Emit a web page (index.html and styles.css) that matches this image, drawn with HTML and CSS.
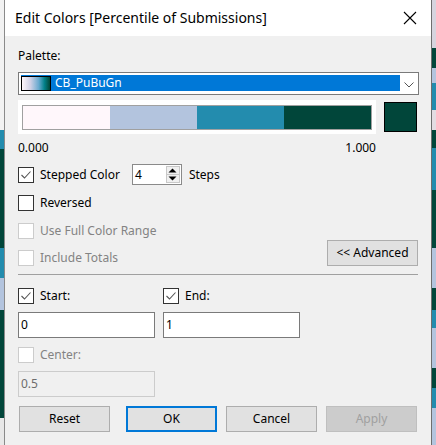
FILE: index.html
```html
<!DOCTYPE html>
<html>
<head>
<meta charset="utf-8">
<link rel="stylesheet" href="styles.css">
</head>
<body>
<div class="screen">
  <div class="strip strip-left"></div>
  <div class="dialog">
    <div class="titlebar">
      <span class="title">Edit Colors [Percentile of Submissions]</span>
      <svg class="close" width="14" height="14" viewBox="0 0 14 14"><path d="M1 1 L13 13 M13 1 L1 13" stroke="#000" stroke-width="1.1" fill="none"/></svg>
    </div>
    <div class="body">
      <div class="label palette-label">Palette:</div>
      <div class="select">
        <div class="select-value"><span class="grad-swatch"></span><span class="select-text">CB_PuBuGn</span></div>
        <svg class="chevron" width="10" height="6" viewBox="0 0 10 6"><path d="M0.5 0.5 L5 5 L9.5 0.5" stroke="#555" stroke-width="1" fill="none"/></svg>
      </div>
      <div class="ramp-row">
        <div class="ramp-panel">
          <div class="ramp">
            <span class="seg seg1"></span><span class="seg seg2"></span><span class="seg seg3"></span><span class="seg seg4"></span>
          </div>
        </div>
        <div class="end-swatch"></div>
      </div>
      <div class="range-labels"><span>0.000</span><span>1.000</span></div>
      <div class="row stepped-row">
        <span class="cb"><svg width="14" height="14" viewBox="0 0 14 14"><path d="M2.5 7 L5.5 10 L11.5 3.5" stroke="#555" stroke-width="1.1" fill="none"/></svg></span>
        <span class="cb-label">Stepped Color</span>
        <div class="spin">
          <span class="spin-val">4</span>
          <span class="spin-btns">
            <span class="spin-btn"><svg width="9" height="5" viewBox="0 0 9 5"><path d="M0.5 4.5 L4.5 0.5 L8.5 4.5 Z" fill="#000"/></svg></span>
            <span class="spin-btn"><svg width="9" height="5" viewBox="0 0 9 5"><path d="M0.5 0.5 L4.5 4.5 L8.5 0.5 Z" fill="#000"/></svg></span>
          </span>
        </div>
        <span class="steps-label">Steps</span>
      </div>
      <div class="row reversed-row">
        <span class="cb"></span>
        <span class="cb-label">Reversed</span>
      </div>
      <div class="options">
        <div class="options-left">
          <div class="row disabled">
            <span class="cb"></span>
            <span class="cb-label">Use Full Color Range</span>
          </div>
          <div class="row disabled totals-row">
            <span class="cb"></span>
            <span class="cb-label">Include Totals</span>
          </div>
        </div>
        <button class="btn advanced">&lt;&lt; Advanced</button>
      </div>
      <div class="separator"></div>
      <div class="limits">
        <div class="limit">
          <div class="row">
            <span class="cb"><svg width="14" height="14" viewBox="0 0 14 14"><path d="M2.5 7 L5.5 10 L11.5 3.5" stroke="#555" stroke-width="1.1" fill="none"/></svg></span>
            <span class="cb-label">Start:</span>
          </div>
          <div class="field">0</div>
        </div>
        <div class="limit">
          <div class="row">
            <span class="cb"><svg width="14" height="14" viewBox="0 0 14 14"><path d="M2.5 7 L5.5 10 L11.5 3.5" stroke="#555" stroke-width="1.1" fill="none"/></svg></span>
            <span class="cb-label">End:</span>
          </div>
          <div class="field">1</div>
        </div>
      </div>
      <div class="center-block">
        <div class="row disabled">
          <span class="cb"></span>
          <span class="cb-label">Center:</span>
        </div>
        <div class="field field-disabled">0.5</div>
      </div>
      <div class="buttons">
        <button class="btn reset">Reset</button>
        <button class="btn ok">OK</button>
        <button class="btn cancel">Cancel</button>
        <button class="btn apply">Apply</button>
      </div>
    </div>
  </div>
  <div class="strip strip-right"></div>
</div>
</body>
</html>
```

FILE: styles.css
```css
* { box-sizing: border-box; }
html, body { margin: 0; padding: 0; }
body {
  width: 436px;
  height: 445px;
  overflow: hidden;
  font-family: "Noto Sans", "Open Sans", sans-serif;
  font-size: 12px;
  color: #000;
}
.screen {
  display: flex;
  width: 436px;
  height: 445px;
}
.strip { height: 445px; }
.strip-left {
  width: 4px;
  background: linear-gradient(to bottom,
    #f2f2f2 0, #f2f2f2 130px,
    #238cae 130px, #238cae 149px,
    #01463a 149px, #01463a 248px,
    #238cae 248px, #238cae 278px,
    #b3c4de 278px, #b3c4de 310px,
    #01463a 310px, #01463a 418px,
    #e8e8e8 418px, #e8e8e8 445px);
}
.strip-right {
  flex: 1;
  background: linear-gradient(to bottom,
    #d6d4de 0, #d6d4de 48px,
    #01463a 48px, #01463a 68px,
    #b3c4de 68px, #b3c4de 83px,
    #238cae 83px, #238cae 110px,
    #e3dce2 110px, #e3dce2 130px,
    #01463a 130px, #01463a 148px,
    #238cae 148px, #238cae 190px,
    #01463a 190px, #01463a 248px,
    #b3c4de 248px, #b3c4de 288px,
    #01463a 288px, #01463a 310px,
    #238cae 310px, #238cae 328px,
    #b3c4de 328px, #b3c4de 368px,
    #01463a 368px, #01463a 388px,
    #238cae 388px, #238cae 408px,
    #b3c4de 408px, #b3c4de 445px);
}
.dialog {
  width: 428px;
  height: 445px;
  border-left: 1px solid #8a8a8a;
  border-right: 1px solid #6e6e6e;
  background: #f0f0f0;
  display: flex;
  flex-direction: column;
}
.titlebar {
  height: 36px;
  background: #fff;
  display: flex;
  align-items: center;
  justify-content: space-between;
  padding: 0 14px 0 10px;
}
.title {
  font-size: 14px;
  line-height: 20px;
  margin-top: -1px;
}
.close { display: block; margin-top: -1px; }
.body {
  padding: 0 12px 0 13px;
  display: flex;
  flex-direction: column;
}
.label, .cb-label, .steps-label { line-height: 16px; }
.palette-label { margin-top: 12px; height: 16px; }
.select {
  margin-top: 8px;
  height: 23px;
  border: 1px solid #7a7a7a;
  background: #fff;
  display: flex;
  align-items: flex-start;
  padding: 2px 0 3px 2px;
}
.select-value {
  width: 379px;
  height: 16px;
  background: #0078d7;
  color: #fff;
  display: flex;
  align-items: center;
}
.grad-swatch {
  width: 30px;
  height: 15px;
  margin-top: 1px;
  align-self: flex-start;
  border: 1px solid #000;
  background: linear-gradient(to right, #fff7fb 0%, #d0d1e6 30%, #67a9cf 60%, #02818a 80%, #014636 100%);
}
.select-text { margin-left: 4px; line-height: 16px; }
.chevron { margin: 7px 0 0 4px; display: block; }
.ramp-row {
  margin-top: 5px;
  display: flex;
  align-items: center;
}
.ramp-panel {
  width: 358px;
  height: 34px;
  background: #fff;
  padding: 5px 4px 4px 4px;
}
.ramp {
  height: 25px;
  border: 1px solid #a0a0a0;
  display: flex;
}
.seg { flex: 1; height: 100%; }
.seg1 { background: #fff7fb; }
.seg2 { background: #b3c4de; }
.seg3 { background: #238cae; }
.seg4 { background: #01463a; }
.end-swatch {
  width: 33px;
  height: 30px;
  margin-left: 8px;
  border: 1px solid #000;
  background: #01463a;
}
.range-labels {
  width: 358px;
  margin-top: 6px;
  height: 16px;
  line-height: 16px;
  display: flex;
  justify-content: space-between;
}
.row {
  display: flex;
  align-items: center;
}
.cb {
  width: 16px;
  height: 16px;
  border: 1px solid #333;
  background: #fff;
  display: inline-flex;
  align-items: center;
  justify-content: center;
  flex: none;
}
.cb svg { display: block; }
.cb-label { margin-left: 6px; }
.disabled .cb { border-color: #cccccc; }
.disabled .cb-label { color: #838383; }
.stepped-row { margin-top: 8px; height: 21px; }
.spin {
  margin-left: 12px;
  width: 50px;
  height: 21px;
  border: 1px solid #8a8a8a;
  background: #fff;
  display: flex;
  align-items: center;
  padding: 0 1px 0 2px;
}
.spin-val { flex: 1; line-height: 16px; }
.spin-btns {
  display: flex;
  flex-direction: column;
  width: 14px;
  height: 17px;
}
.spin-btn {
  flex: 1;
  display: flex;
  align-items: center;
  justify-content: center;
  background: #f0f0f0;
  border: 1px solid #c8c8c8;
}
.spin-btn + .spin-btn { border-top: none; }
.spin-btn svg { display: block; }
.steps-label { margin-left: 7px; }
.reversed-row { margin-top: 10px; height: 16px; }
.options {
  display: flex;
  justify-content: space-between;
  align-items: flex-start;
}
.options-left {
  display: flex;
  flex-direction: column;
}
.options-left .row:first-child { margin-top: 12px; height: 16px; }
.totals-row { margin-top: 11px; height: 16px; }
.btn {
  font-family: inherit;
  font-size: 12px;
  color: #000;
  height: 26px;
  background: #e1e1e1;
  border: 1px solid #adadad;
  padding: 0;
  margin: 0;
  line-height: 16px;
}
.advanced {
  width: 91px;
  margin-top: 29px;
  margin-right: 1px;
}
.separator {
  margin-top: 8px;
  width: 400px;
  height: 1px;
  background: #a0a0a0;
}
.limits {
  display: flex;
  gap: 8px;
  margin-top: 13px;
}
.limit {
  width: 137px;
  display: flex;
  flex-direction: column;
}
.limit .row { height: 16px; }
.field {
  margin-top: 8px;
  height: 26px;
  border: 1px solid #7a7a7a;
  background: #fff;
  padding: 0 2px;
  line-height: 24px;
}
.center-block {
  width: 137px;
  display: flex;
  flex-direction: column;
  margin-top: 9px;
}
.center-block .row { height: 16px; }
.field-disabled {
  background: #f0f0f0;
  border-color: #cccccc;
  color: #6d6d6d;
}
.buttons {
  display: flex;
  margin-top: 9px;
}
.buttons .btn { width: 91px; }
.reset { margin-left: 1px; }
.ok {
  margin-left: 16px;
  border: 2px solid #0078d7;
}
.cancel { margin-left: 9px; }
.apply {
  margin-left: 9px;
  background: #cccccc;
  border-color: #bfbfbf;
  color: #a0a0a0;
}
```
